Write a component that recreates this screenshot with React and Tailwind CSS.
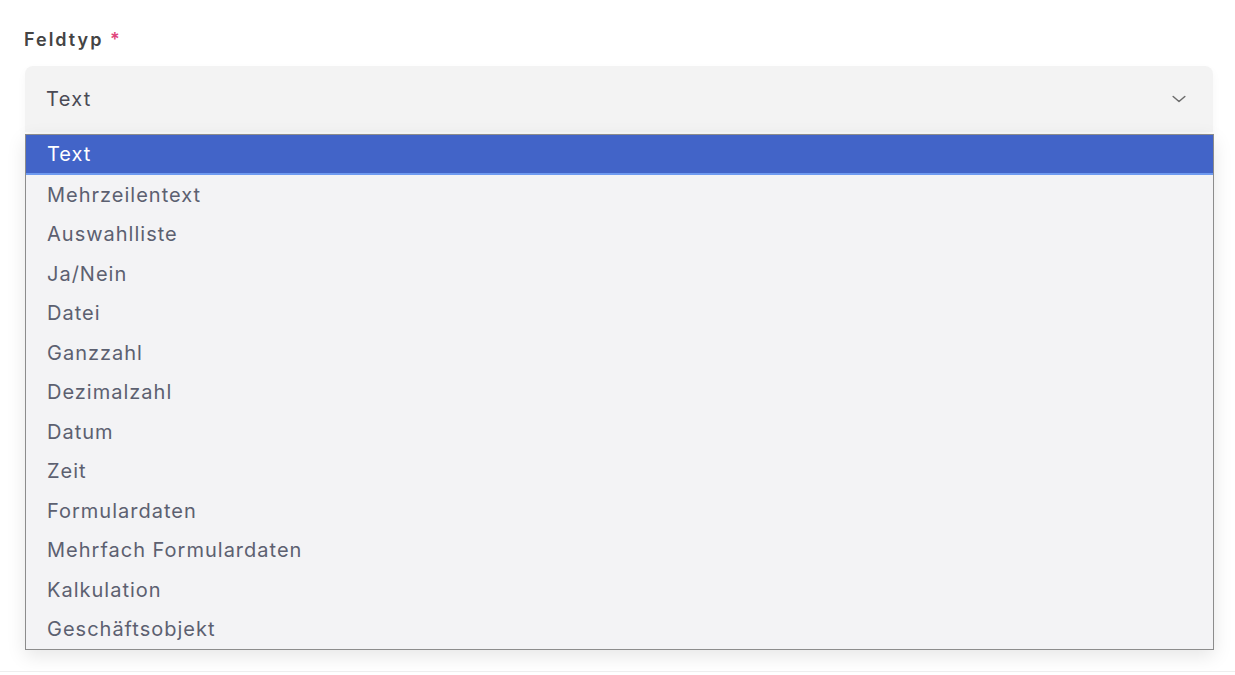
const OPTIONS = [
  "Text",
  "Mehrzeilentext",
  "Auswahlliste",
  "Ja/Nein",
  "Datei",
  "Ganzzahl",
  "Dezimalzahl",
  "Datum",
  "Zeit",
  "Formulardaten",
  "Mehrfach Formulardaten",
  "Kalkulation",
  "Geschäftsobjekt",
];

export default function App() {
  return (
    <div className="w-[1235px] h-[675px] bg-white font-['Inter',sans-serif] overflow-hidden">
      <div className="px-[25px] pt-[27px]">
        <div className="text-[18px] font-semibold text-[#444444] leading-[26px] tracking-[2px] -ml-px">
          Feldtyp <span className="text-[#e0457b]">*</span>
        </div>

        <div className="mt-[13px] w-[1188px] h-[66px] rounded-t-[8px] bg-[#f3f3f3] flex items-center justify-between px-[21px] shadow-[0_4px_10px_rgba(0,0,0,0.04)]">
          <span className="text-[20px] text-[#4a4a55] tracking-[1.3px]">Text</span>
          <svg width="20" height="20" viewBox="0 0 24 24" fill="none" stroke="#6b6b6b" strokeWidth="1.8" strokeLinecap="round" strokeLinejoin="round" className="mr-[3px]">
            <path d="M5 9l7 6 7-6" />
          </svg>
        </div>

        <div className="mt-[2px] w-[1189px] border border-[#8c8c8c] bg-[#f3f3f5] shadow-[0_6px_18px_rgba(0,0,0,0.1)]">
          {OPTIONS.map((opt, i) => (
            <div
              key={opt}
              className={`h-[39.5px] flex items-center px-[21px] pt-[1px] text-[20px] tracking-[1px] ${i === 0 ? "bg-[#4264c8] text-white border-b-[2px] border-[#6e9af0]" : "text-[#5c6070]"}`}
            >
              {opt}
            </div>
          ))}
        </div>
      </div>
      <div className="mt-[21px] h-px bg-[#eeeeee]" />
    </div>
  );
}
